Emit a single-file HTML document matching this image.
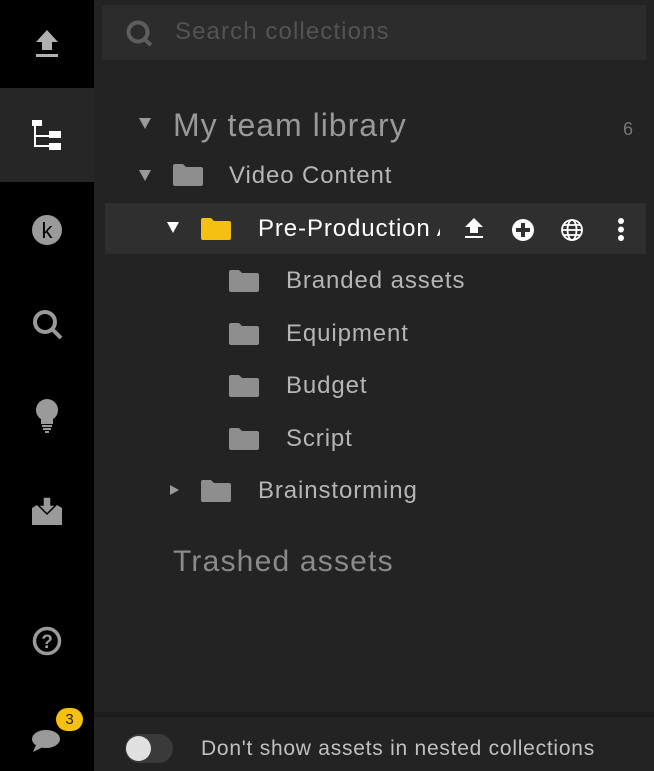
<!DOCTYPE html>
<html><head><style>
*{margin:0;padding:0;box-sizing:border-box}
body{width:654px;height:771px;background:#232323;font-family:"Liberation Sans",sans-serif;position:relative;overflow:hidden}
.sb{position:absolute;left:0;top:0;width:94px;height:771px;background:#000}
.act{position:absolute;left:0;top:88px;width:94px;height:94px;background:#262626}
.ic{position:absolute}
.t{position:absolute;white-space:nowrap;color:#b5b5b5;font-size:24px;line-height:30px;letter-spacing:0.9px}
.tri{position:absolute;width:0;height:0;border-left:6px solid transparent;border-right:6px solid transparent;border-top:11px solid #9a9a9a}
.fold{position:absolute;width:30px;height:22px}
</style></head><body>
<div class="sb"></div><div class="act"></div>
<svg class="ic" style="left:33px;top:28px" width="28" height="32" viewBox="0 0 28 32"><path d="M14 2 L25 14 H19 V22 H9 V14 H3 Z" fill="#b0b0b0"/><rect x="3" y="26" width="22" height="3" fill="#b0b0b0"/></svg>
<svg class="ic" style="left:31px;top:119px" width="32" height="32" viewBox="0 0 32 32"><rect x="1" y="1" width="10" height="6" fill="#fff"/><path d="M4 7V27H18M4 17H18" stroke="#fff" stroke-width="2" fill="none"/><rect x="18" y="12" width="12" height="7" fill="#fff"/><rect x="18" y="24" width="12" height="7" fill="#fff"/></svg>
<svg class="ic" style="left:31px;top:214px" width="32" height="32"><circle cx="16" cy="16" r="15" fill="#9a9a9a"/><text x="16" y="24" text-anchor="middle" font-family="Liberation Sans" font-size="22" fill="#000">k</text></svg>
<svg class="ic" style="left:32px;top:309px" width="32" height="32"><circle cx="13" cy="13" r="10" stroke="#9a9a9a" stroke-width="4" fill="none"/><path d="M21 21L29 29" stroke="#9a9a9a" stroke-width="4"/></svg>
<svg class="ic" style="left:34px;top:398px" width="26" height="38"><circle cx="13" cy="12" r="11" fill="#9a9a9a"/><rect x="7" y="18" width="12" height="8" fill="#9a9a9a"/><rect x="8" y="27" width="10" height="2" fill="#9a9a9a"/><rect x="9" y="30" width="8" height="2" fill="#9a9a9a"/><rect x="11" y="33" width="4" height="2" fill="#9a9a9a"/></svg>
<svg class="ic" style="left:31px;top:496px" width="32" height="30"><path d="M1 12 L6 9 H9 L16 17 L23 9 H26 L31 12 V29 H1Z" fill="#9a9a9a"/><path d="M12 1H20V9H25L16 18L7 9H12Z" fill="#9a9a9a" stroke="#000" stroke-width="1.5"/></svg>
<svg class="ic" style="left:32px;top:626px" width="30" height="30"><circle cx="15" cy="15" r="12.5" stroke="#9a9a9a" stroke-width="3.5" fill="none"/><text x="15" y="22" text-anchor="middle" font-family="Liberation Sans" font-weight="bold" font-size="19" fill="#9a9a9a">?</text></svg>
<svg class="ic" style="left:30px;top:718px" width="36" height="36"><ellipse cx="16" cy="21" rx="14" ry="9" fill="#9a9a9a"/><path d="M6 27L3 34L13 29Z" fill="#9a9a9a"/></svg>
<div style="position:absolute;left:56px;top:708px;width:27px;height:23px;border-radius:12px;background:#f5c012;color:#222;font-size:15px;text-align:center;line-height:23px">3</div>

<div style="position:absolute;left:102px;top:5px;width:544px;height:55px;background:#2c2c2c"></div>
<svg class="ic" style="left:125px;top:20px" width="30" height="30"><circle cx="13" cy="12" r="9.5" stroke="#5e5e5e" stroke-width="4" fill="none"/><path d="M19 19L26 25" stroke="#5e5e5e" stroke-width="4"/></svg>
<div class="t" style="left:175px;top:17px;color:#535353;letter-spacing:1.1px">Search collections</div>

<div class="tri" style="left:139px;top:118px"></div>
<div class="t" style="left:173px;top:106px;font-size:32px;line-height:38px;color:#999;letter-spacing:1px">My team library</div>
<div class="t" style="left:623px;top:114px;font-size:18px;color:#777">6</div>

<div class="tri" style="left:139px;top:170px"></div>
<svg class="fold" style="left:173px;top:164px"><path d="M0 2Q0 0 2 0H10L13 3H28Q30 3 30 5V20Q30 22 28 22H2Q0 22 0 20Z" fill="#8e8e8e"/></svg>
<div class="t" style="left:229px;top:161px">Video Content</div>

<div style="position:absolute;left:105px;top:203px;width:541px;height:51px;background:#2f2f2f"></div>
<div class="tri" style="left:167px;top:222px;border-top-color:#fff"></div>
<svg class="fold" style="left:201px;top:218px"><path d="M0 2Q0 0 2 0H10L13 3H28Q30 3 30 5V20Q30 22 28 22H2Q0 22 0 20Z" fill="#f5c012"/></svg>
<div class="t" style="left:258px;top:214px;color:#fff;width:182px;overflow:hidden">Pre-Production Assets</div>
<svg class="ic" style="left:463px;top:217px" width="22" height="24"><path d="M11 1L20 10H15V16H7V10H2Z" fill="#fff"/><rect x="2" y="19" width="18" height="2" fill="#fff"/></svg>
<svg class="ic" style="left:511px;top:218px" width="24" height="24"><circle cx="12" cy="12" r="11" fill="#fff"/><path d="M12 5V19M5 12H19" stroke="#2f2f2f" stroke-width="4"/></svg>
<svg class="ic" style="left:560px;top:218px" width="24" height="24" fill="none" stroke="#fff" stroke-width="1.8"><circle cx="12" cy="12" r="10"/><ellipse cx="12" cy="12" rx="4.5" ry="10"/><path d="M2 12H22M4 7H20M4 17H20"/></svg>
<svg class="ic" style="left:615px;top:217px" width="12" height="26"><circle cx="6" cy="4" r="3" fill="#fff"/><circle cx="6" cy="12.5" r="3" fill="#fff"/><circle cx="6" cy="21" r="3" fill="#fff"/></svg>

<svg class="fold" style="left:229px;top:270px"><path d="M0 2Q0 0 2 0H10L13 3H28Q30 3 30 5V20Q30 22 28 22H2Q0 22 0 20Z" fill="#8e8e8e"/></svg>
<div class="t" style="left:286px;top:266px">Branded assets</div>
<svg class="fold" style="left:229px;top:323px"><path d="M0 2Q0 0 2 0H10L13 3H28Q30 3 30 5V20Q30 22 28 22H2Q0 22 0 20Z" fill="#8e8e8e"/></svg>
<div class="t" style="left:286px;top:319px">Equipment</div>
<svg class="fold" style="left:229px;top:375px"><path d="M0 2Q0 0 2 0H10L13 3H28Q30 3 30 5V20Q30 22 28 22H2Q0 22 0 20Z" fill="#8e8e8e"/></svg>
<div class="t" style="left:286px;top:371px">Budget</div>
<svg class="fold" style="left:229px;top:428px"><path d="M0 2Q0 0 2 0H10L13 3H28Q30 3 30 5V20Q30 22 28 22H2Q0 22 0 20Z" fill="#8e8e8e"/></svg>
<div class="t" style="left:286px;top:424px">Script</div>

<div style="position:absolute;left:170px;top:485px;width:0;height:0;border-top:5px solid transparent;border-bottom:5px solid transparent;border-left:9px solid #9a9a9a"></div>
<svg class="fold" style="left:201px;top:480px"><path d="M0 2Q0 0 2 0H10L13 3H28Q30 3 30 5V20Q30 22 28 22H2Q0 22 0 20Z" fill="#8e8e8e"/></svg>
<div class="t" style="left:258px;top:476px">Brainstorming</div>

<div class="t" style="left:173px;top:543px;font-size:30px;line-height:38px;color:#8a8a8a;letter-spacing:1.2px">Trashed assets</div>

<div style="position:absolute;left:94px;top:712px;width:560px;height:5px;background:#1c1c1c"></div>
<div style="position:absolute;left:125px;top:734px;width:48px;height:29px;border-radius:15px;background:#3a3a3a"></div>
<div style="position:absolute;left:126px;top:736px;width:25px;height:25px;border-radius:50%;background:#e0e0e0"></div>
<div class="t" style="left:201px;top:734px;font-size:21px;color:#c0c0c0;letter-spacing:0.75px">Don't show assets in nested collections</div>
</body></html>
